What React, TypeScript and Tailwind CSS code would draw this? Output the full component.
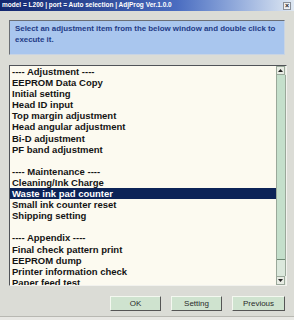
const items: { label: string; selected?: boolean }[] = [
  { label: "---- Adjustment ----" },
  { label: "EEPROM Data Copy" },
  { label: "Initial setting" },
  { label: "Head ID input" },
  { label: "Top margin adjustment" },
  { label: "Head angular adjustment" },
  { label: "Bi-D adjustment" },
  { label: "PF band adjustment" },
  { label: "" },
  { label: "---- Maintenance ----" },
  { label: "Cleaning/Ink Charge" },
  { label: "Waste ink pad counter", selected: true },
  { label: "Small ink counter reset" },
  { label: "Shipping setting" },
  { label: "" },
  { label: "---- Appendix ----" },
  { label: "Final check pattern print" },
  { label: "EEPROM dump" },
  { label: "Printer information check" },
  { label: "Paper feed test" },
];

function Arrow({ up }: { up?: boolean }) {
  return (
    <div className="flex h-[9px] w-[9px] items-center justify-center border border-[#9aa89a] bg-[#e8ece4]">
      <svg width="5" height="3" viewBox="0 0 5 3">
        <path d={up ? "M0 3 L2.5 0 L5 3 Z" : "M0 0 L2.5 3 L5 0 Z"} fill="#222" />
      </svg>
    </div>
  );
}

function Button({ label, className }: { label: string; className: string }) {
  return (
    <button
      className={
        "h-[15px] border border-t-[#f4f8f0] border-l-[#f4f8f0] border-r-[#555] border-b-[#555] bg-[#cfe3cf] text-[8px] text-[#2a2a2a] " +
        className
      }
    >
      {label}
    </button>
  );
}

export default function App() {
  return (
    <div
      className="flex h-[320px] w-[294px] flex-col overflow-hidden bg-[#dbdcd6]"
      style={{ fontFamily: '"Liberation Sans", Arial, sans-serif' }}
    >
      <div className="flex h-[11px] items-center bg-gradient-to-r from-[#13266e] via-[#4a6cc0] via-60% to-[#dfe8f2] pl-[2px] pr-[3px]">
        <span className="whitespace-nowrap text-[6.5px] font-bold leading-none text-white">
          model = L200 | port = Auto selection | AdjProg Ver.1.0.0
        </span>
        <div className="ml-auto flex h-[8px] w-[8px] items-center justify-center border border-[#8a8f98] bg-[#eef0f2] text-[7px] font-bold leading-none text-[#222]">
          ×
        </div>
      </div>

      <div className="flex flex-1 flex-col px-[9px] pt-[9px]">
        <div className="h-[35px] w-[276px] border border-t-[#6a6e74] border-l-[#6a6e74] border-r-[#c8d4e4] border-b-[#c8d4e4] bg-[#a9c6ee] px-[5px] pt-[2px] text-[7.9px] font-bold leading-[11px] text-[#1f3b86]">
          Select an adjustment item from the below window and double click to execute it.
        </div>

        <div className="mt-[10px] flex h-[221px] w-[278px] border border-t-[#505358] border-l-[#505358] border-r-[#f2f2ee] border-b-[#f2f2ee] bg-[#fcfaf0]">
          <div className="flex-1 overflow-hidden">
            {items.map((item, i) => (
              <div
                key={i}
                className={
                  "h-[11.1px] whitespace-nowrap pl-[2px] text-[9.5px] font-bold leading-[11px] " +
                  (item.selected ? "bg-[#0c2357] text-white" : "text-[#141414]")
                }
              >
                {item.label}
              </div>
            ))}
          </div>
          <div className="flex w-[10px] flex-col bg-[#e6ece2]">
            <Arrow up />
            <div className="flex-1 border-x border-[#9aa89a] bg-[#dbe8dc]">
              <div className="h-[185px] border-b border-[#6f8a74] bg-[#c4dfcb]" />
            </div>
            <Arrow />
          </div>
        </div>

        <div className="mt-[10px] flex justify-end gap-[10px]">
          <Button label="OK" className="w-[51px]" />
          <Button label="Setting" className="w-[51px]" />
          <Button label="Previous" className="w-[53px]" />
        </div>
      </div>
      <div className="h-[4px] border-t border-[#b8b8b2] bg-[#e8e8e4]" />
    </div>
  );
}
